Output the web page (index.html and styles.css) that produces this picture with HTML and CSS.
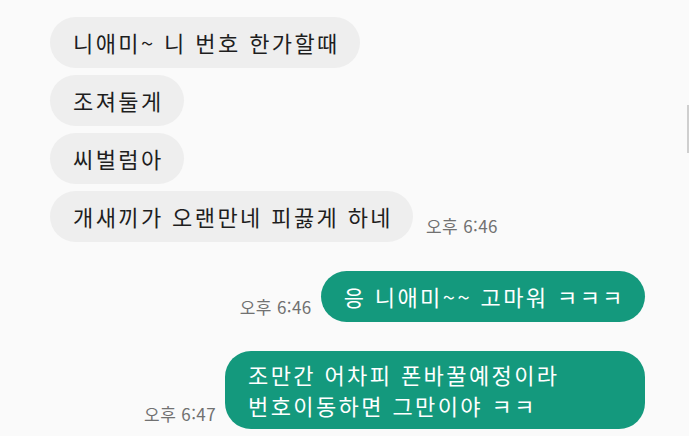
FILE: index.html
```html
<!DOCTYPE html>
<html lang="ko">
<head>
    <meta charset="UTF-8">
    <meta name="viewport" content="width=device-width, initial-scale=1.0">
    <title>메시지</title>
    <link rel="stylesheet" href="styles.css">
</head>
<body>
    <div class="chat">
        <div class="group in">
            <div class="row"><div class="bubble">니애미~ 니 번호 한가할때</div></div>
            <div class="row"><div class="bubble">조져둘게</div></div>
            <div class="row"><div class="bubble">씨벌럼아</div></div>
            <div class="row"><div class="bubble">개새끼가 오랜만네 피끓게 하네</div><span class="time">오후 6:46</span></div>
        </div>
        <div class="group out">
            <div class="row"><span class="time">오후 6:46</span><div class="bubble">응 니애미~~ 고마워 ㅋㅋㅋ</div></div>
        </div>
        <div class="group out">
            <div class="row"><span class="time">오후 6:47</span><div class="bubble wide">조만간 어차피 폰바꿀예정이라<br>번호이동하면 그만이야 ㅋㅋ</div></div>
        </div>
    </div>
    <div class="scrollbar"></div>
</body>
</html>
```

FILE: styles.css
```css
body { margin: 0; background-color: #fafafa; font-family: "Noto Sans CJK KR", "Noto Sans", sans-serif; height: 436px; overflow: hidden; position: relative; }
.chat { padding: 17px 44px 0 50px; }
.group { display: flex; flex-direction: column; gap: 7px; }
.group + .group { margin-top: 29px; }
.row { display: flex; align-items: flex-end; }
.out .row { justify-content: flex-end; }
.bubble { font-size: 22px; line-height: 31px; padding: 10px 20px 10px 23px; border-radius: 26px; color: #1e1e1e; background-color: #eeeeee; letter-spacing: 2.4px; }
.bubble.wide { width: 420px; box-sizing: border-box; padding-top: 8px; padding-bottom: 8px; }
.out .bubble { background-color: #14997d; color: #ffffff; }
.time { font-size: 17px; color: #717171; margin: 0 13px 4px 13px; letter-spacing: 0.4px; }
.out .time { margin: 0 9px 3px 0; }
.scrollbar { position: absolute; left: 687px; top: 105px; width: 2px; height: 48px; background-color: #cfcfcf; }
```
